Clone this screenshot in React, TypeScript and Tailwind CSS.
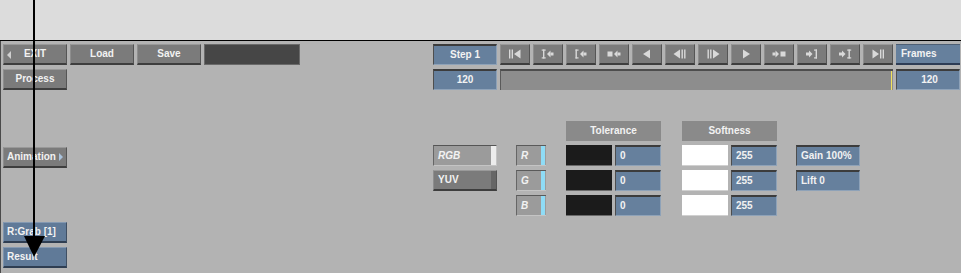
import React from "react";

const gray =
  "h-[21px] bg-[#7b7b7b] border-t border-l border-t-[#999999] border-l-[#8e8e8e] border-b-2 border-r border-b-[#3e3e3e] border-r-[#555555] flex items-center";
const blueField =
  "h-[21px] bg-[#66809d] border-t-2 border-l border-t-[#3c3c3c] border-l-[#4e4e4e] border-b border-r border-b-[#8ea2b8] border-r-[#8ea2b8] flex items-center";
const blueBtn =
  "h-[21px] bg-[#607a98] border-t border-l border-t-[#8499b2] border-l-[#7d93ad] border-b-2 border-r border-b-[#2f3e52] border-r-[#3f4f63] flex items-center";

function Icon({ children }: { children: React.ReactNode }) {
  return (
    <svg width="20" height="12" viewBox="0 0 20 12" fill="#d9d9d9">
      {children}
    </svg>
  );
}

// left pointing arrow (head + tail) starting at x
const ArrowL = ({ x }: { x: number }) => (
  <>
    <polygon points={`${x},6 ${x + 3.5},2.5 ${x + 3.5},9.5`} />
    <rect x={x + 3.5} y={4.5} width={3} height={3} />
  </>
);
const ArrowR = ({ x }: { x: number }) => (
  <>
    <rect x={x} y={4.5} width={3} height={3} />
    <polygon points={`${x + 6.5},6 ${x + 3},2.5 ${x + 3},9.5`} />
  </>
);
const IBeam = ({ x }: { x: number }) => (
  <>
    <rect x={x} y={1.5} width={1.4} height={9} />
    <rect x={x - 1.3} y={1.5} width={4} height={1.2} />
    <rect x={x - 1.3} y={9.3} width={4} height={1.2} />
  </>
);
const BracketL = ({ x }: { x: number }) => (
  <>
    <rect x={x} y={1.5} width={1.4} height={9} />
    <rect x={x} y={1.5} width={3} height={1.2} />
    <rect x={x} y={9.3} width={3} height={1.2} />
  </>
);
const BracketR = ({ x }: { x: number }) => (
  <>
    <rect x={x + 1.6} y={1.5} width={1.4} height={9} />
    <rect x={x} y={1.5} width={3} height={1.2} />
    <rect x={x} y={9.3} width={3} height={1.2} />
  </>
);
const Bars = ({ x }: { x: number }) => (
  <>
    <rect x={x} y={1.5} width={1.4} height={9} />
    <rect x={x + 2.6} y={1.5} width={1.4} height={9} />
  </>
);

const transport: React.ReactNode[] = [
  <Icon key="1">
    <Bars x={4} />
    <polygon points="9,6 15.5,1.5 15.5,10.5" />
  </Icon>,
  <Icon key="2">
    <IBeam x={5} />
    <ArrowL x={9} />
  </Icon>,
  <Icon key="3">
    <BracketL x={4.5} />
    <ArrowL x={9} />
  </Icon>,
  <Icon key="4">
    <rect x={3.5} y={3.5} width={5} height={5} />
    <ArrowL x={10} />
  </Icon>,
  <Icon key="5">
    <polygon points="6,6 13,1.5 13,10.5" />
  </Icon>,
  <Icon key="6">
    <polygon points="3.5,6 10,1.5 10,10.5" />
    <Bars x={11.5} />
  </Icon>,
  <Icon key="7">
    <Bars x={4.5} />
    <polygon points="16.5,6 10,1.5 10,10.5" />
  </Icon>,
  <Icon key="8">
    <polygon points="14,6 7,1.5 7,10.5" />
  </Icon>,
  <Icon key="9">
    <ArrowR x={3.5} />
    <rect x={11.5} y={3.5} width={5} height={5} />
  </Icon>,
  <Icon key="10">
    <ArrowR x={4} />
    <BracketR x={12} />
  </Icon>,
  <Icon key="11">
    <ArrowR x={4} />
    <IBeam x={13.5} />
  </Icon>,
  <Icon key="12">
    <polygon points="11,6 4.5,1.5 4.5,10.5" />
    <Bars x={12} />
  </Icon>,
];

function Toggle({ label, active }: { label: string; active: boolean }) {
  return (
    <div
      className={
        active
          ? "h-[21px] w-[64px] bg-[#9b9b9b] border-t border-l border-t-[#555555] border-l-[#666666] border-b border-r border-b-[#c4c4c4] border-r-[#c4c4c4] flex items-center"
          : "h-[21px] w-[64px] bg-[#7b7b7b] border-t border-l border-t-[#9a9a9a] border-l-[#8e8e8e] border-b-2 border-r border-b-[#3e3e3e] border-r-[#555555] flex items-center"
      }
    >
      <span className={active ? "flex-1 pl-[4px] italic" : "flex-1 pl-[4px]"}>{label}</span>
      <span className={active ? "w-[5px] h-full bg-[#ededed]" : "w-[5px] h-full bg-[#666666]"} />
    </div>
  );
}

function Channel({ label }: { label: string }) {
  return (
    <div className="h-[21px] w-[30px] bg-[#9b9b9b] border-t border-l border-t-[#5a5a5a] border-l-[#666666] border-b border-b-[#c4c4c4] flex items-center">
      <span className="flex-1 pl-[4px] italic">{label}</span>
      <span className="w-[4px] h-full bg-[#8fdcf6] mr-[1px]" />
    </div>
  );
}

export default function App() {
  return (
    <div className="relative w-[961px] h-[273px] overflow-hidden bg-[#b3b3b3] text-[10px] font-bold text-[#f2f2f2] font-['Liberation_Sans',Arial,sans-serif] leading-none">
      {/* top strip */}
      <div className="h-[41px] bg-[#dcdcdc] border-b border-b-black" />

      <div className="h-[232px] border-l border-l-[#4a4a4a] pl-[2px] pt-[3px] flex flex-col">
        {/* row 1 */}
        <div className="flex">
          <div className="w-[430px] flex gap-[3px]">
            <div className={gray + " w-[64px] relative justify-center"}>
              <span className="absolute left-[3px] top-[6px] w-0 h-0 border-y-[4px] border-y-transparent border-r-[4px] border-r-[#cfcfcf]" />
              EXIT
            </div>
            <div className={gray + " w-[64px] justify-center"}>Load</div>
            <div className={gray + " w-[64px] justify-center"}>Save</div>
            <div className="h-[21px] w-[96px] bg-[#464646] border border-[#6a6a6a]" />
          </div>
          <div className="flex gap-[3px]">
            <div className={blueField + " w-[64px] justify-center"}>Step 1</div>
            {transport.map((icon, i) => (
              <div key={i} className={gray + " w-[30px] justify-center"}>
                {icon}
              </div>
            ))}
            <div className="h-[21px] w-[64px] bg-[#66809d] border-t border-t-[#4e5f74] border-b-2 border-b-[#2d3c55] flex items-center pl-[5px]">
              Frames
            </div>
          </div>
        </div>

        {/* row 2 */}
        <div className="flex mt-[4px]">
          <div className="w-[430px]">
            <div className={gray + " w-[64px] justify-center"}>Process</div>
          </div>
          <div className="flex gap-[3px]">
            <div className={blueField + " w-[64px] justify-center"}>120</div>
            <div className="h-[21px] w-[393px] bg-[#8d8d8d] border-t-2 border-l border-t-[#4d4d4d] border-l-[#5a5a5a] flex justify-end">
              <span className="w-[1px] h-full bg-[#f2e25a] mr-[1px]" />
            </div>
            <div className={blueField + " w-[64px] justify-center pl-[3px]"}>120</div>
          </div>
        </div>

        {/* middle */}
        <div className="flex mt-[31px]">
          <div className="w-[430px] pt-[26px]">
            <div className={gray + " w-[64px] justify-between pl-[3px] pr-[3px]"}>
              Animation
              <span className="w-0 h-0 border-y-[4px] border-y-transparent border-l-[4px] border-l-[#a9c2dc]" />
            </div>
          </div>

          <div className="flex">
            <div className="w-[83px] pt-[24px] flex flex-col gap-[4px]">
              <Toggle label="RGB" active />
              <Toggle label="YUV" active={false} />
            </div>
            <div className="w-[50px] pt-[24px] flex flex-col gap-[4px]">
              <Channel label="R" />
              <Channel label="G" />
              <Channel label="B" />
            </div>
            <div className="w-[116px] flex flex-col">
              <div className="h-[20px] w-[95px] bg-[#8a8a8a] flex items-center justify-center">Tolerance</div>
              <div className="flex flex-col gap-[4px] mt-[4px]">
                {[0, 1, 2].map((i) => (
                  <div key={i} className="flex gap-[3px]">
                    <div className="h-[21px] w-[46px] bg-[#1b1b1b] border-b border-b-[#6a6a6a]" />
                    <div className={blueField + " w-[46px] pl-[4px]"}>0</div>
                  </div>
                ))}
              </div>
            </div>
            <div className="w-[114px] flex flex-col">
              <div className="h-[20px] w-[95px] bg-[#8a8a8a] flex items-center justify-center">Softness</div>
              <div className="flex flex-col gap-[4px] mt-[4px]">
                {[0, 1, 2].map((i) => (
                  <div key={i} className="flex gap-[3px]">
                    <div className="h-[21px] w-[46px] bg-white border-b border-b-[#d0d0d0]" />
                    <div className={blueField + " w-[46px] pl-[4px]"}>255</div>
                  </div>
                ))}
              </div>
            </div>
            <div className="pt-[24px] flex flex-col gap-[4px]">
              <div className={blueField + " w-[64px] pl-[4px]"}>Gain 100%</div>
              <div className={blueField + " w-[64px] pl-[4px]"}>Lift 0</div>
            </div>
          </div>
        </div>

        {/* bottom left */}
        <div className="flex flex-col gap-[4px] mt-[6px]">
          <div className={blueBtn + " w-[64px] pl-[3px]"}>R:Grab [1]</div>
          <div className={blueBtn + " w-[64px] pl-[3px]"}>Result</div>
        </div>
      </div>

      {/* callout arrow */}
      <svg className="absolute inset-0 pointer-events-none" width="961" height="273">
        <rect x="33" y="0" width="2" height="240" fill="#000" />
        <polygon points="24,236 45,236 34,257" fill="#000" />
      </svg>
    </div>
  );
}
